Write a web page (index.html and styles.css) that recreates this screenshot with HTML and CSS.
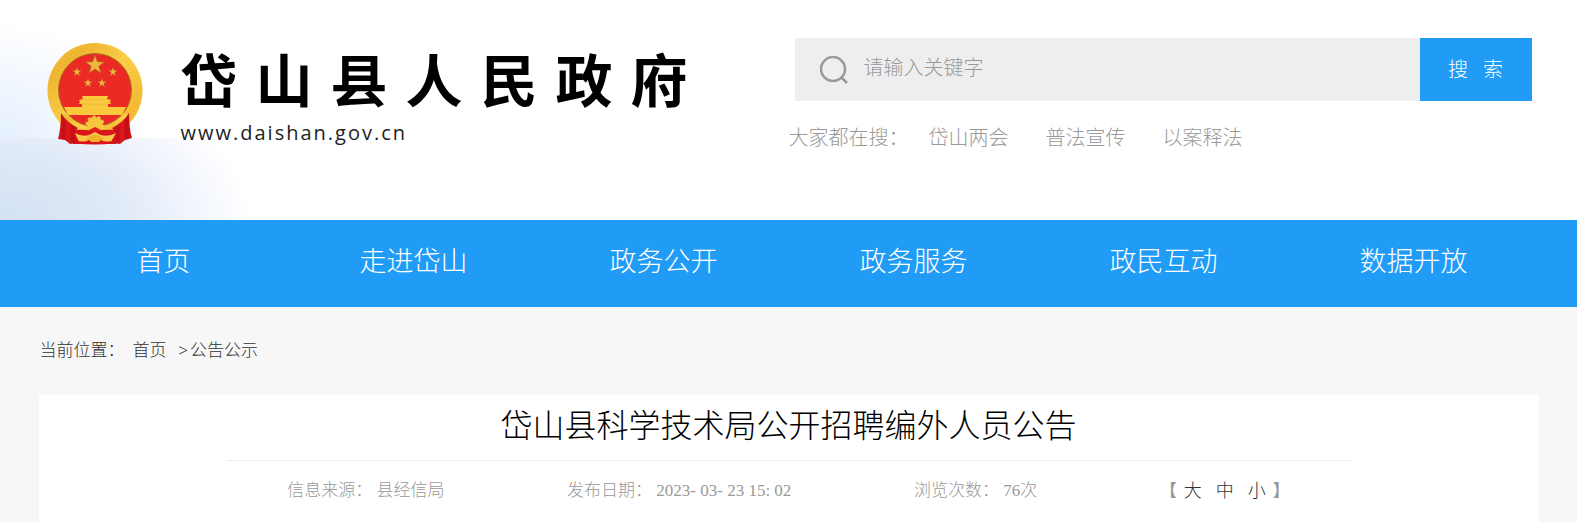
FILE: index.html
```html
<!DOCTYPE html>
<html lang="zh-CN">

<head>
	<title>岱山县科学技术局公开招聘编外人员公告</title>
	<meta charset="UTF-8">
	<meta name="viewport" content="width=device-width, initial-scale=1.0">
	<link rel="stylesheet" href="styles.css">
</head>

<body>
	<header class="header">
		<div class="container header-inner">
			<a class="brand" href="#">
				<svg class="emblem" viewBox="0 0 98 104" aria-hidden="true">
					<defs>
						<linearGradient id="gold" x1="0" y1="0" x2="1" y2="1">
							<stop offset="0" stop-color="#f5c13a" />
							<stop offset="0.2" stop-color="#efb631" />
							<stop offset="0.5" stop-color="#fbd04a" />
							<stop offset="0.8" stop-color="#f4ba32" />
							<stop offset="1" stop-color="#fbcb3f" />
						</linearGradient>
						<linearGradient id="drape">
							<stop offset="0" stop-color="#e0161c" />
							<stop offset="0.3" stop-color="#c20f16" />
							<stop offset="0.5" stop-color="#e3181e" />
							<stop offset="0.75" stop-color="#bd0e14" />
							<stop offset="1" stop-color="#de151b" />
						</linearGradient>
						<path id="star" d="M0-10 2.4-3.2 9.5-3.1 3.8 1.2 5.9 8.1 0 4-5.9 8.1-3.8 1.2-9.5-3.1-2.4-3.2z" />
					</defs>
					<!-- wreath -->
					<circle cx="49" cy="49.5" r="47.5" fill="url(#gold)" />
					<circle cx="49" cy="49.5" r="42" fill="none" stroke="#d99518" stroke-width="5" stroke-dasharray="1 3" opacity="0.15" />
					<circle cx="49" cy="49" r="36.5" fill="#ec2a25" stroke="#a8701c" stroke-width="1" />
					<!-- stars -->
					<g fill="#eeb83c" stroke="#a8601d" stroke-width="0.6">
						<use href="#star" x="49" y="24" />
						<use href="#star" transform="translate(31 31) scale(0.45)" />
						<use href="#star" transform="translate(67 31) scale(0.45)" />
						<use href="#star" transform="translate(42 42) scale(0.45)" />
						<use href="#star" transform="translate(56 42) scale(0.45)" />
					</g>
					<!-- gate -->
					<g fill="#fbc93c">
						<path d="M36 55h26l-1 3 4 1-1 2 1 2H33l1-2-1-2 4-1z" />
						<path d="M36 61h26v6H36z" />
						<path d="M18 66h62l-4 8H22z" />
					</g>
					<path d="M36 58.500H62M35 63H63" stroke="#e09a24" stroke-width="0.6" opacity="0.6" />
					<!-- lower wreath and gear -->
					<path d="M18 72Q32 86 49 87 66 86 80 72L84 84Q68 92 49 91 30 92 14 84z" fill="url(#gold)" />
					<circle cx="49" cy="84" r="8" fill="#f8c63d" stroke="#f8c63d" stroke-width="3" stroke-dasharray="3 2" />
					<path d="M26 89Q37 88 49 90 61 88 72 89L70 103H27z" fill="#d9151b" />
					<path d="M49 86l6 3-6 3-6-3z" fill="#e21f20" />
					<path d="M29 92Q36 96 43 94L49 91 55 94Q63 96 70 92L65 101H56L53 99H45L42 101H33z" fill="#f6c846" />
					<path d="M40 98Q49 90 58 98L53 101H45z" fill="#eeb22d" />
					<path d="M28 99Q38 102 43 99L46 102H52L55 99Q60 102 69 99V102Q49 105 28 102z" fill="#d9151b" />
					<!-- drapes -->
					<path d="M15 72Q20 81 32 87L27 93 31 102 24 103 19 99 12 98Q15 87 15 72z" fill="url(#drape)" />
					<path d="M83 72Q78 81 66 87L71 93 67 102 74 103 79 99 86 97Q83 87 83 72z" fill="url(#drape)" />
				</svg>
				<span class="brand-text">
					<span class="brand-name">岱山县人民政府</span>
					<span class="brand-url">www.daishan.gov.cn</span>
				</span>
			</a>

			<div class="search">
				<form class="search-form">
					<label class="search-label" for="keyword" aria-label="关键字">
						<svg class="search-icon" viewBox="0 0 28 28">
							<circle cx="13" cy="13" r="12" />
							<path d="M21 21l6 6" />
						</svg>
					</label>
					<input class="search-input" type="text" id="keyword" name="keyword" placeholder="请输入关键字">
					<button class="search-btn" type="submit">搜&nbsp;&nbsp;&nbsp;索</button>
				</form>
				<div class="hot">
					<span class="hot-title">大家都在搜：</span>
					<a href="#">岱山两会</a>
					<a href="#">普法宣传</a>
					<a href="#">以案释法</a>
				</div>
			</div>
		</div>
	</header>

	<nav class="nav">
		<div class="container nav-inner">
			<a href="#">首页</a>
			<a href="#">走进岱山</a>
			<a href="#">政务公开</a>
			<a href="#">政务服务</a>
			<a href="#">政民互动</a>
			<a href="#">数据开放</a>
		</div>
	</nav>

	<div class="container crumbs">
		<span>当前位置：</span>
		<a class="crumbs-home" href="#">首页</a>
		<span class="crumbs-sep">&gt;</span>
		<a href="#">公告公示</a>
	</div>

	<main class="container article">
		<h1 class="article-title">岱山县科学技术局公开招聘编外人员公告</h1>
		<div class="meta">
			<span>信息来源：&nbsp;县经信局</span>
			<span>发布日期：&nbsp;2023- 03- 23 15: 02</span>
			<span>浏览次数：&nbsp;76次</span>
			<span class="font-size">
				<b>【</b><button type="button">大</button><button type="button">中</button><button type="button">小</button><b>】</b>
			</span>
		</div>
	</main>
</body>

</html>
```

FILE: styles.css
```css
* {
	box-sizing: border-box;
}

body {
	display: flex;
	flex-direction: column;
	min-height: 100vh;
	margin: 0;
	background-color: #f7f7f7;
	color: #333;
	font-family: "Liberation Serif", "Noto Sans CJK SC", serif;
	font-size: 17px;
	font-weight: 300;
}

a {
	color: inherit;
	text-decoration: none;
}

button,
input {
	border: none;
	font: inherit;
}

button {
	cursor: pointer;
}

.container {
	width: 100%;
	max-width: 1500px;
	margin: 0 auto;
}

/* Header with sky and sea fading out from the left */
.header {
	background-color: #fff;
	background-image:
		radial-gradient(ellipse 250px 150px at 0 100%, #d3e1f3, #dfe9f7 45%, #f0f4fc 75%, #fff),
		radial-gradient(ellipse 150px 115px at 0 100%, #e4f0fd, #f2f7fe 50%, #fff);
	background-repeat: no-repeat;
	background-position: 0 100%, 0 0;
	background-size: 100% 82px, 100% 138px;
}

.header-inner {
	display: flex;
	justify-content: space-between;
	padding: 38px 7px 69px;
}

.brand {
	display: flex;
	align-items: flex-start;
	gap: 37px;
	padding-top: 3px;
	color: #000;
}

.emblem {
	flex: none;
	width: 98px;
	height: 104px;
}

.brand-text {
	display: flex;
	flex-direction: column;
}

.brand-name {
	font-family: "Noto Sans CJK SC", sans-serif;
	font-size: 57px;
	font-weight: 700;
	letter-spacing: 18px;
	line-height: 72px;
	white-space: nowrap;
}

.brand-url {
	padding-top: 4px;
	color: #222;
	font-family: "Open Sans", sans-serif;
	font-size: 20px;
	font-weight: 400;
	letter-spacing: 2px;
	line-height: 32px;
}

.search {
	width: 50%;
	color: #999;
	font-size: 20px;
}

.search-form {
	display: flex;
	height: 63px;
	margin-left: 6px;
	background-color: #eee;
}

.search-label {
	display: flex;
	align-items: center;
	padding: 0 16px 0 25px;
}

.search-icon {
	width: 28px;
	height: 28px;
	fill: none;
	stroke: #999;
	stroke-width: 2.5;
}

.search-input {
	flex: 1;
	min-width: 0;
	padding: 0 0 2px;
	background: none;
	color: #666;
	outline: none;
}

.search-input::placeholder {
	color: #999;
}

.search-btn {
	width: 112px;
	padding: 0 0 3px;
	background-color: #209cf7;
	color: #fff;
}

.hot {
	display: flex;
	gap: 37px;
	margin-top: 24px;
	line-height: 26px;
}

.hot-title {
	margin-right: -17px;
}

.nav {
	background-color: #209cf7;
	color: #fff;
	font-size: 27px;
}

.nav-inner {
	display: grid;
	grid-template-columns: repeat(6, 1fr);
	padding-bottom: 3px;
	line-height: 84px;
	text-align: center;
}

.crumbs {
	display: flex;
	padding-left: 1px;
	line-height: 88px;
}

.crumbs-home {
	margin: 0 12px 0 8px;
}

.crumbs-sep {
	margin-right: 2px;
}

.article {
	flex: 1;
	background-color: #fff;
}

.article-title {
	width: 75%;
	margin: 0 auto;
	padding-bottom: 2px;
	border-bottom: 1px solid #eee;
	color: #000;
	font-size: 32px;
	font-weight: 300;
	line-height: 63px;
	text-align: center;
}

.meta {
	display: flex;
	justify-content: space-around;
	width: 75%;
	margin: 0 auto;
	color: #999;
	line-height: 60px;
}

.font-size button {
	padding: 0 7px;
	background: none;
	color: #333;
	font-size: 18px;
}

.font-size b {
	font-weight: 700;
}
```
